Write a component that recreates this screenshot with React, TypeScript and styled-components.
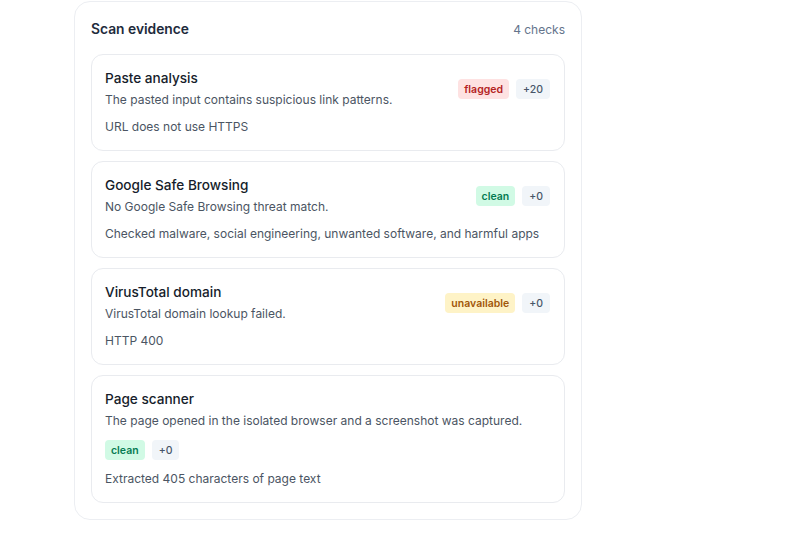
import React from 'react';
import styled, { createGlobalStyle } from 'styled-components';

type Tone = 'flagged' | 'clean' | 'unavailable';

interface Check {
  title: string;
  summary: string;
  detail: string;
  status: Tone;
  score: string;
  badgesBelow?: boolean;
}

const checks: Check[] = [
  {
    title: 'Paste analysis',
    summary: 'The pasted input contains suspicious link patterns.',
    detail: 'URL does not use HTTPS',
    status: 'flagged',
    score: '+20',
  },
  {
    title: 'Google Safe Browsing',
    summary: 'No Google Safe Browsing threat match.',
    detail: 'Checked malware, social engineering, unwanted software, and harmful apps',
    status: 'clean',
    score: '+0',
  },
  {
    title: 'VirusTotal domain',
    summary: 'VirusTotal domain lookup failed.',
    detail: 'HTTP 400',
    status: 'unavailable',
    score: '+0',
  },
  {
    title: 'Page scanner',
    summary: 'The page opened in the isolated browser and a screenshot was captured.',
    detail: 'Extracted 405 characters of page text',
    status: 'clean',
    score: '+0',
    badgesBelow: true,
  },
];

const toneColors: Record<Tone, { bg: string; fg: string }> = {
  flagged: { bg: '#fee2e2', fg: '#b42323' },
  clean: { bg: '#d1fae5', fg: '#067a52' },
  unavailable: { bg: '#fef3c7', fg: '#a1570a' },
};

const GlobalStyle = createGlobalStyle`
  body {
    margin: 0;
    background: #ffffff;
    font-family: Inter, "Noto Sans", sans-serif;
    -webkit-font-smoothing: antialiased;
  }
`;

const Page = styled.div`
  padding: 1px 0 0 74px;
`;

const Panel = styled.section`
  width: 508px;
  box-sizing: border-box;
  border: 1px solid #eceef2;
  border-radius: 16px;
  padding: 15px 16px 16px;
  background: #ffffff;
`;

const PanelHeader = styled.div`
  display: flex;
  align-items: center;
  justify-content: space-between;
  height: 24px;
  margin-bottom: 13px;
`;

const PanelTitle = styled.h2`
  margin: 0;
  font-size: 13.8px;
  font-weight: 600;
  color: #1e2b3c;
`;

const PanelCount = styled.span`
  font-size: 12px;
  color: #64748b;
`;

const CardList = styled.div`
  display: flex;
  flex-direction: column;
  gap: 10px;
`;

const Card = styled.div`
  border: 1px solid #e9ebef;
  border-radius: 12px;
  padding: 13px 14px 13px 13px;
  display: flex;
  flex-direction: column;
  gap: 7px;
`;

const CardTop = styled.div`
  display: flex;
  align-items: center;
  justify-content: space-between;
  gap: 12px;
`;

const CardText = styled.div`
  display: flex;
  flex-direction: column;
  gap: 2px;
`;

const CardTitle = styled.div`
  font-size: 13.6px;
  font-weight: 500;
  line-height: 20px;
  color: #161d2b;
`;

const Summary = styled.div`
  font-size: 12px;
  line-height: 20px;
  color: #4b5563;
`;

const Detail = styled.div`
  font-size: 12px;
  line-height: 20px;
  color: #4b5563;
`;

const Badges = styled.div<{ $below?: boolean }>`
  display: flex;
  gap: 7px;
  flex-shrink: 0;
  margin: ${p => (p.$below ? '2px 0' : '0')};
`;

const Badge = styled.span<{ $tone?: Tone }>`
  display: inline-flex;
  align-items: center;
  height: 20px;
  padding: ${p => (p.$tone ? '0 6px' : '0 7px')};
  border-radius: 4px;
  font-size: 10.5px;
  font-weight: ${p => (p.$tone ? 600 : 500)};
  background: ${p => (p.$tone ? toneColors[p.$tone].bg : '#f1f5f9')};
  color: ${p => (p.$tone ? toneColors[p.$tone].fg : '#475569')};
`;

function CheckBadges({ status, score, below }: { status: Tone; score: string; below?: boolean }) {
  return (
    <Badges $below={below}>
      <Badge $tone={status}>{status}</Badge>
      <Badge>{score}</Badge>
    </Badges>
  );
}

function CheckCard({ check }: { check: Check }) {
  return (
    <Card>
      <CardTop>
        <CardText>
          <CardTitle>{check.title}</CardTitle>
          <Summary>{check.summary}</Summary>
        </CardText>
        {!check.badgesBelow && <CheckBadges status={check.status} score={check.score} />}
      </CardTop>
      {check.badgesBelow && <CheckBadges status={check.status} score={check.score} below />}
      <Detail>{check.detail}</Detail>
    </Card>
  );
}

export default function App() {
  return (
    <>
      <GlobalStyle />
      <Page>
        <Panel>
          <PanelHeader>
            <PanelTitle>Scan evidence</PanelTitle>
            <PanelCount>{checks.length} checks</PanelCount>
          </PanelHeader>
          <CardList>
            {checks.map(c => (
              <CheckCard key={c.title} check={c} />
            ))}
          </CardList>
        </Panel>
      </Page>
    </>
  );
}
